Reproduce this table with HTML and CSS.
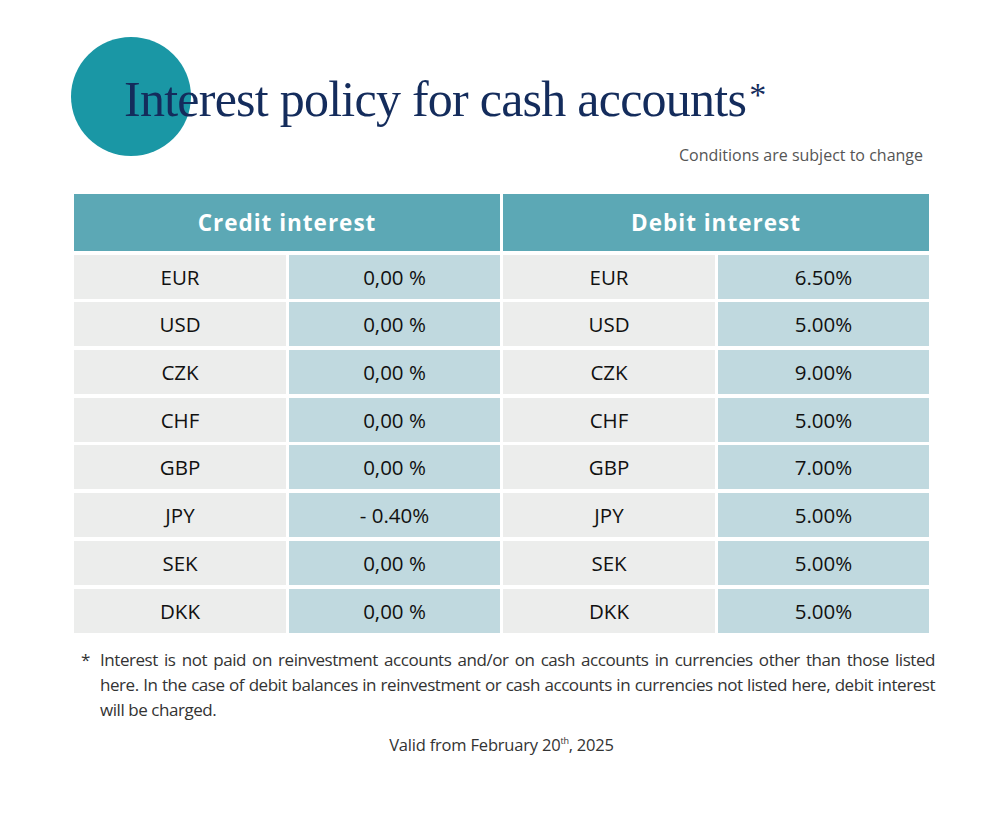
FILE: index.html
```html
<!DOCTYPE html>
<html lang="en">
<head>
<meta charset="utf-8">
<title>Interest policy for cash accounts</title>
<link rel="stylesheet" href="styles.css">
</head>
<body>
<main class="page">
  <header class="hero">
    <div class="blob"></div>
    <h1 class="title">Interest policy for cash accounts<span class="star">*</span></h1>
  </header>
  <p class="subtitle">Conditions are subject to change</p>

  <section class="table">
    <div class="head">Credit interest</div>
    <div class="head">Debit interest</div>

    <div class="cur">EUR</div><div class="val">0,00 %</div><div class="cur">EUR</div><div class="val">6.50%</div>
    <div class="cur">USD</div><div class="val">0,00 %</div><div class="cur">USD</div><div class="val">5.00%</div>
    <div class="cur">CZK</div><div class="val">0,00 %</div><div class="cur">CZK</div><div class="val">9.00%</div>
    <div class="cur">CHF</div><div class="val">0,00 %</div><div class="cur">CHF</div><div class="val">5.00%</div>
    <div class="cur">GBP</div><div class="val">0,00 %</div><div class="cur">GBP</div><div class="val">7.00%</div>
    <div class="cur">JPY</div><div class="val">- 0.40%</div><div class="cur">JPY</div><div class="val">5.00%</div>
    <div class="cur">SEK</div><div class="val">0,00 %</div><div class="cur">SEK</div><div class="val">5.00%</div>
    <div class="cur">DKK</div><div class="val">0,00 %</div><div class="cur">DKK</div><div class="val">5.00%</div>
  </section>

  <div class="note">
    <span class="mark">*</span>
    <p class="note-text"><span class="line">Interest is not paid on reinvestment accounts and/or on cash accounts in currencies other than those listed</span>
      <span class="line">here. In the case of debit balances in reinvestment or cash accounts in currencies not listed here, debit interest</span>
      <span class="last">will be charged.</span></p>
  </div>
  <p class="valid">Valid from February 20<sup>th</sup>, 2025</p>
</main>
</body>
</html>
```

FILE: styles.css
```css
* { box-sizing: border-box; }
html, body { margin: 0; padding: 0; background: #fff; }
body { font-family: "Open Sans", "Liberation Sans", sans-serif; color: #111; }

.page {
  width: 1000px;
  padding: 37px 65px 0 74px;
}

.hero {
  position: relative;
  height: 119px;
}
.blob {
  position: absolute;
  left: -3px;
  top: 0;
  width: 120px;
  height: 119px;
  border-radius: 50%;
  background: #1a97a5;
}
.title {
  position: relative;
  margin: 0;
  padding: 37px 0 0 50px;
  font-family: "Liberation Serif", "DejaVu Serif", serif;
  font-weight: 400;
  font-size: 50px;
  line-height: 50px;
  color: #142c5c;
  letter-spacing: -0.75px;
}
.star { font-size: 34px; vertical-align: 10px; margin-left: 3px; line-height: 0; }

.subtitle {
  margin: -12px 12px 0 0;
  text-align: right;
  font-size: 16px;
  line-height: 22px;
  color: #555;
  font-weight: 400;
}

.table {
  margin-top: 28px;
  display: grid;
  grid-template-columns: 212px 211px 212px 211px;
  gap: 3.7px 3px;
}
.head {
  grid-column: span 2;
  height: 57px;
  background: #5ca8b5;
  color: #fff;
  font-weight: 700;
  font-size: 22.5px;
  letter-spacing: 1px;
  display: flex;
  align-items: center;
  justify-content: center;
}
.cur, .val {
  height: 44px;
  display: flex;
  align-items: center;
  justify-content: center;
  font-size: 20.5px;
  color: #111;
}
.cur { background: #ecedec; }
.val { background: #c0d9df; }

.note {
  display: flex;
  margin-top: 14px;
  padding-left: 7px;
  color: #333;
  font-size: 17px;
  line-height: 25px;
  font-weight: 400;
}
.mark { width: 19px; flex: none; }
.note-text {
  margin: 0;
  flex: none;
  width: 835px;
  letter-spacing: -0.45px;
}
.line {
  display: block;
  white-space: nowrap;
  text-align: justify;
  text-align-last: justify;
}
.last { display: block; }
.valid {
  margin: 11px 0 0;
  padding-right: 6px;
  text-align: center;
  font-size: 16.5px;
  color: #333;
  font-weight: 400;
  letter-spacing: -0.2px;
}
.valid sup { font-size: 9px; vertical-align: 7px; line-height: 0; }
```
